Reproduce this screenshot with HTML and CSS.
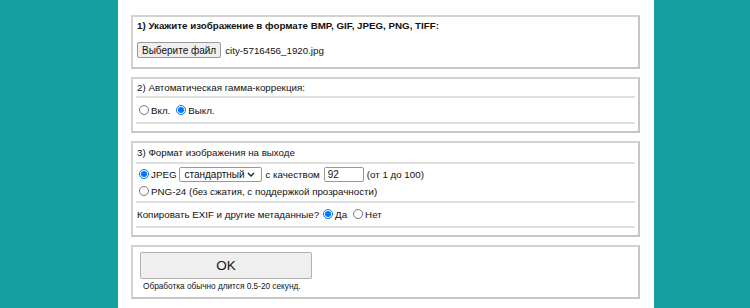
FILE: index.html
```html
<!doctype html>
<html lang="ru">
<head>
	<meta charset="utf-8">
	<title>Конвертер изображений</title>
	<link rel="stylesheet" href="styles.css">
</head>
<body>
	<div class="page">
		<form class="panel" action="#">
			<div class="box box-upload">
				<div class="row row-head"><b>1) Укажите изображение в формате BMP, GIF, JPEG, PNG, TIFF:</b></div>
				<div class="row row-file">
					<button type="button" class="file-btn">Выберите файл</button>
					<span class="file-name">city-5716456_1920.jpg</span>
				</div>
			</div>

			<div class="box">
				<div class="row row-head">2) Автоматическая гамма-коррекция:</div>
				<hr>
				<div class="row row-radio">
					<label><input type="radio" name="gamma" value="1">Вкл.</label>
					<label><input type="radio" name="gamma" value="0" checked>Выкл.</label>
				</div>
				<hr>
			</div>

			<div class="box">
				<div class="row row-head">3) Формат изображения на выходе</div>
				<hr>
				<div class="row row-jpeg">
					<label><input type="radio" name="format" value="jpg" checked>JPEG</label>
					<span class="select-wrap">
						<select class="select">
							<option>стандартный</option>
							<option>прогрессивный</option>
						</select>
						<svg class="chevron" width="8" height="5" viewBox="0 0 8 5"><path d="M1 1l3 3 3-3" fill="none" stroke="#222" stroke-width="1.4"/></svg>
					</span>
					<span>с качеством</span>
					<input type="text" class="quality" value="92">
					<span>(от 1 до 100)</span>
				</div>
				<div class="row row-png">
					<label><input type="radio" name="format" value="png">PNG-24 (без сжатия, с поддержкой прозрачности)</label>
				</div>
				<hr class="hr-gap">
				<div class="row row-exif">
					<span>Копировать EXIF и другие метаданные?</span>
					<label><input type="radio" name="exif" value="1" checked>Да</label>
					<label><input type="radio" name="exif" value="0">Нет</label>
				</div>
				<hr class="hr-gap">
			</div>

			<div class="box box-submit">
				<button type="submit" class="ok-btn">OK</button>
				<p class="note">Обработка обычно длится 0.5-20 секунд.</p>
			</div>
		</form>
	</div>
</body>
</html>
```

FILE: styles.css
```css
* {
	box-sizing: border-box;
}
html,
body {
	margin: 0;
	height: 100%;
}
body {
	background: #14a0a0;
	font-family: "Liberation Sans", Arial, sans-serif;
	font-size: 9.75px;
	color: #111;
}

.page {
	margin-left: 118px;
	width: 536px;
	min-height: 308px;
	background: #fff;
	padding-top: 15px;
}
.panel {
	margin: 0;
}

.box {
	margin: 0 14px 8px 13px;
	border: 2px solid #d2d2d2;
	border-right-color: #c6c6c6;
	border-bottom-color: #c6c6c6;
	padding: 0 3px 6px;
}
.box-upload {
	padding-bottom: 9px;
}

.row {
	display: flex;
	align-items: center;
	white-space: nowrap;
	padding-left: 1px;
}
.row label {
	display: inline-flex;
	align-items: center;
}
.row-head {
	height: 16px;
}
.box:nth-child(3) .row-head {
	height: 18px;
}
.row-file {
	height: 16px;
	margin-top: 9px;
}
.row-radio {
	height: 22px;
	padding-left: 0;
}
.row-jpeg {
	height: 18px;
	padding-left: 0;
}
.row-png {
	height: 16px;
	padding-left: 0;
}
.row-exif {
	height: 20px;
}

hr {
	border: 0;
	height: 2px;
	background: #dedede;
	margin: 1px 0;
}
.hr-gap {
	margin-top: 2px;
}

input[type=radio] {
	width: 10px;
	height: 10px;
	margin: 0 2px 0 3px;
}
.row-radio label + label,
.row-exif label + label {
	margin-left: 3px;
}
.row-exif span {
	margin-right: 1px;
}

.file-btn {
	height: 16px;
	padding: 0 4px;
	font: 10px "Liberation Sans", Arial, sans-serif;
	color: #111;
	background: #efefef;
	border: 1px solid #999;
	border-radius: 2px;
}
.file-name {
	margin-left: 4px;
}

.select-wrap {
	position: relative;
	display: inline-block;
	margin: 0 3px;
}
.select {
	display: block;
	width: 83px;
	height: 15px;
	padding: 0 0 0 4px;
	font: 10px "Liberation Sans", Arial, sans-serif;
	color: #111;
	border: 1px solid #999;
	border-radius: 2px;
	background: #fff;
	appearance: none;
	-webkit-appearance: none;
}
.chevron {
	position: absolute;
	right: 7px;
	top: 5px;
	pointer-events: none;
}
.quality {
	width: 40px;
	height: 15px;
	margin: 0 3px 0 4px;
	padding: 0 3px;
	font: 10px "Liberation Sans", Arial, sans-serif;
	color: #111;
	border: 1px solid #999;
	border-radius: 2px;
}

.box-submit {
	margin-bottom: 0;
	padding: 5px 3px 2px;
}
.ok-btn {
	display: block;
	width: 172px;
	height: 27px;
	margin-left: 4px;
	font: 13.5px "Liberation Sans", Arial, sans-serif;
	color: #111;
	background: #efefef;
	border: 1px solid #b0b0b0;
	border-radius: 2px;
}
.note {
	margin: 0;
	height: 16px;
	line-height: 16px;
	padding-left: 7px;
	font-size: 8.25px;
}
```
